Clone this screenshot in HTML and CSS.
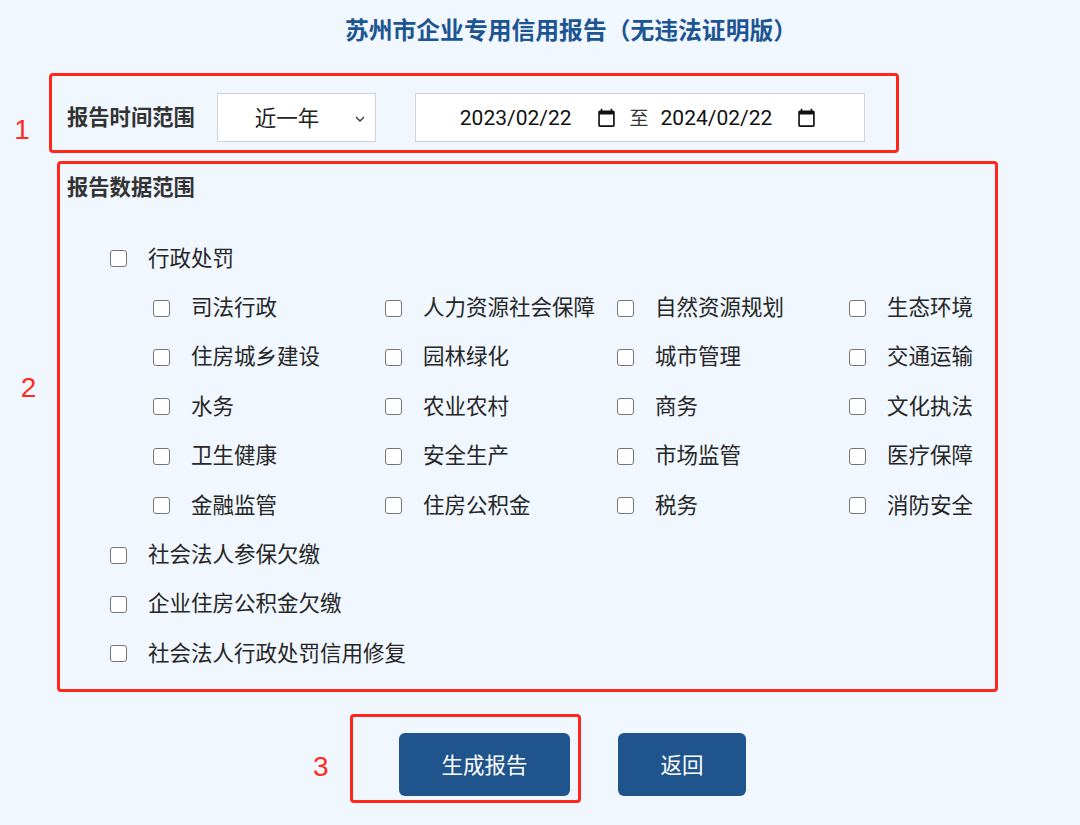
FILE: index.html
```html
<!DOCTYPE html>
<html lang="zh-CN">
<head>
  <meta charset="UTF-8" />
  <meta name="viewport" content="width=device-width, initial-scale=1.0" />
  <title>苏州市企业专用信用报告</title>
  <link rel="stylesheet" href="styles.css">
</head>
<body>
  <h1 class="title">苏州市企业专用信用报告（无违法证明版）</h1>

  <div class="sec sec-time">
    <div class="num num1">1</div>
    <div class="mark mark1">
      <span class="label">报告时间范围</span>
      <div class="select">
        <span>近一年</span>
        <svg class="chev" width="10" height="6" viewBox="0 0 10 6"><path d="M1 1l4 4 4-4" fill="none" stroke="#333" stroke-width="1.3"/></svg>
      </div>
      <div class="dates">
        <span class="date">2023/02/22</span>
        <svg class="cal" width="17" height="19" viewBox="2 0 20 23"><path d="M20 3h-1V1h-2v2H7V1H5v2H4c-1.1 0-2 .9-2 2v16c0 1.1.9 2 2 2h16c1.1 0 2-.9 2-2V5c0-1.1-.9-2-2-2zm0 18H4V8h16v13z" fill="#111"/></svg>
        <span class="to">至</span>
        <span class="date">2024/02/22</span>
        <svg class="cal" width="17" height="19" viewBox="2 0 20 23"><path d="M20 3h-1V1h-2v2H7V1H5v2H4c-1.1 0-2 .9-2 2v16c0 1.1.9 2 2 2h16c1.1 0 2-.9 2-2V5c0-1.1-.9-2-2-2zm0 18H4V8h16v13z" fill="#111"/></svg>
      </div>
    </div>
  </div>

  <div class="sec sec-data">
    <div class="num num2">2</div>
    <div class="mark mark2">
      <div class="label heading">报告数据范围</div>
      <label class="item top"><input type="checkbox"><span>行政处罚</span></label>
      <div class="sub">
        <label class="item"><input type="checkbox"><span>司法行政</span></label>
        <label class="item"><input type="checkbox"><span>人力资源社会保障</span></label>
        <label class="item"><input type="checkbox"><span>自然资源规划</span></label>
        <label class="item"><input type="checkbox"><span>生态环境</span></label>
        <label class="item"><input type="checkbox"><span>住房城乡建设</span></label>
        <label class="item"><input type="checkbox"><span>园林绿化</span></label>
        <label class="item"><input type="checkbox"><span>城市管理</span></label>
        <label class="item"><input type="checkbox"><span>交通运输</span></label>
        <label class="item"><input type="checkbox"><span>水务</span></label>
        <label class="item"><input type="checkbox"><span>农业农村</span></label>
        <label class="item"><input type="checkbox"><span>商务</span></label>
        <label class="item"><input type="checkbox"><span>文化执法</span></label>
        <label class="item"><input type="checkbox"><span>卫生健康</span></label>
        <label class="item"><input type="checkbox"><span>安全生产</span></label>
        <label class="item"><input type="checkbox"><span>市场监管</span></label>
        <label class="item"><input type="checkbox"><span>医疗保障</span></label>
        <label class="item"><input type="checkbox"><span>金融监管</span></label>
        <label class="item"><input type="checkbox"><span>住房公积金</span></label>
        <label class="item"><input type="checkbox"><span>税务</span></label>
        <label class="item"><input type="checkbox"><span>消防安全</span></label>
      </div>
      <label class="item top"><input type="checkbox"><span>社会法人参保欠缴</span></label>
      <label class="item top"><input type="checkbox"><span>企业住房公积金欠缴</span></label>
      <label class="item top"><input type="checkbox"><span>社会法人行政处罚信用修复</span></label>
    </div>
  </div>

  <div class="actions">
    <div class="num num3">3</div>
    <div class="mark mark3">
      <button class="btn btn-main">生成报告</button>
    </div>
    <button class="btn btn-back">返回</button>
  </div>
</body>
</html>
```

FILE: styles.css
```css
* { box-sizing: border-box; margin: 0; padding: 0; }
html, body { width: 100%; height: 100%; }
body { background: #f0f7fe; font-family: "Noto Sans CJK SC", "Noto Sans", sans-serif; color: #262626; }

.title { padding: 13px 0 0 62px; height: 47px; line-height: 32px; text-align: center; font-size: 23.8px; font-weight: 700; color: #1d5592; }

.sec { display: flex; align-items: flex-start; }
.num { color: #ff2a20; font-family: "Liberation Sans", sans-serif; font-size: 28px; line-height: 34px; text-align: center; }
.num1 { width: 44px; margin: 40px 5px 0 0; }
.num2 { width: 57px; margin-top: 210px; }
.num3 { width: 37px; margin: 36px 0 0 0; text-align: left; }

.mark { border: 3px solid #ff2719; border-radius: 4px; }

.sec-time { margin-top: 26px; }
.mark1 { width: 850px; height: 80px; padding: 17px 0 8px 15px; display: flex; align-items: center; }
.label { font-size: 21.3px; font-weight: 700; color: #333; line-height: 30px; padding-bottom: 3px; }

.select { width: 159px; height: 49px; margin-left: 22px; background: #fff; border: 1px solid #cfd3d7; display: flex; align-items: center; padding: 0 10px 0 37px; font-size: 21.5px; color: #222; }
.select span { flex: 1; padding-bottom: 3px; }
.chev { margin-top: 2px; }

.dates { width: 450px; height: 49px; margin-left: 39px; background: #fff; border: 1px solid #cfd3d7; display: flex; align-items: center; padding-left: 44px; }
.date { font-family: Roboto, "Noto Sans CJK SC", sans-serif; font-size: 21px; color: #111; }
.cal { margin: 0 15px 0 26px; }
.to { font-size: 19px; color: #333; margin-right: 12px; padding-bottom: 2px; }

.sec-data { margin-top: 8px; }
.mark2 { width: 941px; height: 531px; padding: 7px 0 0 7px; }
.heading { margin-bottom: 30px; }

.item { display: flex; align-items: center; height: 49.4px; font-size: 21.5px; color: #262626; }
.item.top { padding-left: 43px; }
.item span { padding-bottom: 5px; }
.item input { appearance: none; width: 17px; height: 17px; margin-right: 21px; background: #fff; border: 1.5px solid #767676; border-radius: 3px; }
.sub { display: grid; grid-template-columns: repeat(4, 232px); grid-auto-rows: 49.4px; padding-left: 86px; }

.actions { display: flex; align-items: flex-start; margin: 22px 0 0 313px; }
.mark3 { width: 231px; height: 89px; padding: 16px 8px 4px 46px; }
.btn { height: 63px; border: none; border-radius: 6px; background: #1f548c; color: #fff; font-family: "Noto Sans CJK SC", sans-serif; font-size: 21.5px; padding-bottom: 3px; }
.btn-main { width: 171px; }
.btn-back { width: 128px; margin: 19px 0 0 37px; }
```
